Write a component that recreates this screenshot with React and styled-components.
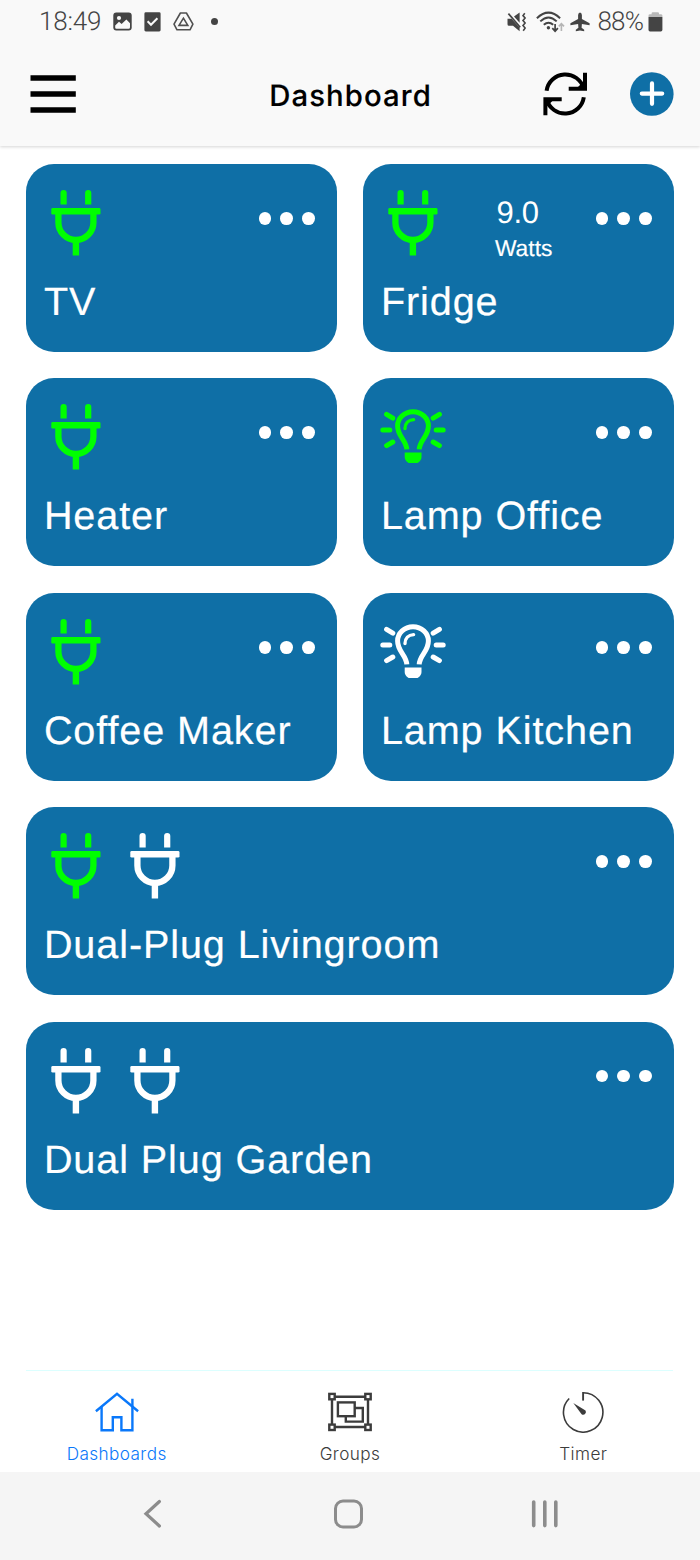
import React from "react"
import styled, { createGlobalStyle } from "styled-components"

const GlobalStyle = createGlobalStyle`
  * {
    box-sizing: border-box;
  }
  body {
    margin: 0;
    background: #ffffff;
    text-rendering: geometricPrecision;
  }
  button {
    padding: 0;
    border: none;
    background: none;
    font: inherit;
    color: inherit;
  }
  svg {
    display: block;
    flex: none;
  }
`

const Screen = styled.div`
  display: flex;
  flex-direction: column;
  width: 700px;
  height: 1560px;
  overflow: hidden;
  font-family: "Liberation Sans", Arial, sans-serif;
`

const Header = styled.header`
  height: 146px;
  background: #f9f9f9;
  box-shadow: 0 1px 3px rgba(0, 0, 0, 0.17);
`

const StatusBar = styled.div`
  display: flex;
  justify-content: space-between;
  height: 42px;
  padding: 0 37px 0 39px;
  font-family: Roboto, sans-serif;
  font-size: 26px;
  font-weight: 300;
  line-height: 42px;
  color: #444444;
`

const StatusGroup = styled.div`
  display: flex;
  align-items: center;
  height: 43px;
`

const StatusText = styled.span`
  width: ${(props) => props.$width}px;
  letter-spacing: ${(props) => props.$spacing || 0}px;
  white-space: nowrap;
`

const StatusIcons = styled.div`
  display: flex;
  align-items: center;
  gap: 12px;
  margin-left: 9px;
`

const SignalIcons = styled.div`
  display: flex;
  align-items: center;
  gap: ${(props) => props.$gap}px;
  margin-right: ${(props) => props.$after}px;
`

const Toolbar = styled.div`
  display: flex;
  align-items: center;
  height: 104px;
  padding: 0 26px 0 30px;
`

const ToolbarSide = styled.div`
  display: flex;
  flex: 1 0 0;
  justify-content: ${(props) => (props.$end ? "flex-end" : "flex-start")};
  gap: 42px;
`

const Title = styled.h1`
  margin: 0;
  padding: 6px 3px 0 0;
  font-family: Inter, sans-serif;
  font-size: 29.3px;
  font-weight: 500;
  line-height: 36px;
  letter-spacing: 1.1px;
  color: #000000;
  -webkit-text-stroke: 0.15px #000000;
`

const Devices = styled.main`
  display: grid;
  flex: 1;
  grid-template-columns: 1fr 1fr;
  grid-auto-rows: 188px;
  align-content: start;
  gap: 26.4px 26.5px;
  padding: 18px 26.5px 0 26px;
`

const Card = styled.section`
  display: flex;
  flex-direction: column;
  grid-column: ${(props) => (props.$wide ? "span 2" : "auto")};
  padding: 26px 21.5px 0 17.3px;
  border-radius: 28px;
  background: #0f6fa6;
  color: #ffffff;
`

const CardTop = styled.div`
  display: flex;
  justify-content: space-between;
  height: 66px;
`

const Plugs = styled.div`
  display: flex;
  gap: 12.4px;
`

const IconButton = styled.button`
  display: block;
  color: ${(props) => (props.$on ? "#00ff00" : "#ffffff")};
`

const Reading = styled.div`
  display: flex;
  flex-direction: column;
  width: 60px;
  margin-left: 8px;
  padding-top: 5px;
`

const Amount = styled.span`
  padding-left: 1.5px;
  font-size: 31px;
  line-height: 36px;
  letter-spacing: -0.3px;
`

const Unit = styled.span`
  font-size: 22.8px;
  line-height: 34px;
  -webkit-text-stroke: 0.15px #ffffff;
`

const More = styled.button`
  display: flex;
  gap: 9px;
  height: 13px;
  margin-top: 22px;
`

const Dot = styled.span`
  width: 12.8px;
  height: 12.8px;
  border-radius: 50%;
  background: #ffffff;
`

const Name = styled.h2`
  margin: 23px 0 0 0.6px;
  font-size: 39.6px;
  font-weight: 400;
  line-height: 46px;
  letter-spacing: 0.9px;
  white-space: nowrap;
  -webkit-text-stroke: 0.2px #ffffff;
`

const TabBar = styled.nav`
  display: flex;
  height: 102px;
  margin: 0 27px 0 26px;
  border-top: 1px solid #dcffff;
`

const Tabs = styled.div`
  display: flex;
  flex: 1;
  margin: 0 -27px 0 -26px;
`

const Tab = styled.button`
  display: flex;
  flex: 1;
  flex-direction: column;
  align-items: center;
  width: 0;
  padding-top: 20px;
  font-family: Inter, sans-serif;
  font-size: 17.2px;
  font-weight: 300;
  line-height: 22px;
  letter-spacing: 0.4px;
  color: ${(props) => (props.$active ? "#0a78fa" : "#3c3c3c")};
`

const TabLabel = styled.span`
  margin-top: 10px;
`

const SystemNav = styled.footer`
  display: flex;
  justify-content: space-between;
  height: 88px;
  padding: 25px 139px 0 141px;
  background: #f5f5f5;
  color: #8c8c8c;
`

const PhotoIcon = () => (
  <svg width="19" height="19" viewBox="0 0 19 19">
    <rect x="0.3" y="0.4" width="18.4" height="18.2" rx="3" fill="#444" />
    <circle cx="6" cy="6" r="2.1" fill="#f9f9f9" />
    <path d="M2.2 15.7V13.4L6 9.8L8.6 12L13.4 7.6L17 11.2V15.2Q17 16.8 15.6 16.8H3.4Q2.2 16.8 2.2 15.7Z" fill="#f9f9f9" />
  </svg>
)

const TaskIcon = () => (
  <svg width="17" height="20" viewBox="0 0 17 20">
    <rect x="0.4" y="0.3" width="16.2" height="19.2" rx="1.4" fill="#444" />
    <path d="M3.6 9.3L7 12.8L13.4 6.2" fill="none" stroke="#f9f9f9" strokeWidth="2" />
  </svg>
)

const DriveIcon = () => (
  <svg width="21" height="19" viewBox="0 0 21 19" fill="none" stroke="#505050">
    <path d="M7.4 1H13.4L19.9 12.2L17 17.8H4L1 12.2Z" strokeWidth="1.6" strokeLinejoin="round" />
    <path d="M10.4 6.2L14.8 13.4H6Z" strokeWidth="1.6" />
  </svg>
)

const StatusDot = styled.span`
  width: 7.4px;
  height: 7.4px;
  margin-left: 17px;
  border-radius: 50%;
  background: #444444;
`

const MuteIcon = () => (
  <svg width="20" height="20" viewBox="0 0 20 20">
    <path d="M0.5 6.8H4.6L12.6 15.4V19.2L6 13.8H2Q0.5 13.8 0.5 12.2Z" fill="#444" />
    <path d="M7 4.6L12.6 0.6V10.8Z" fill="#444" />
    <path d="M1.4 1.6L13.2 15.2" stroke="#444" strokeWidth="1.7" />
    <path d="M17.8 1.2L16 3.6L18.1 6.1L16 8.6L18.1 11.1L16 13.6L18.1 16.1L16.2 18.8" fill="none" stroke="#444" strokeWidth="1.6" />
  </svg>
)

const WifiIcon = () => (
  <svg width="29" height="22" viewBox="0 0 29 22" fill="none" stroke="#444" strokeWidth="2">
    <path d="M0.9 7.2Q12.5 -4 24.1 7.2" />
    <path d="M4.3 10.4Q12.5 2.6 20.7 10.4" />
    <path d="M7.8 13.8Q12.5 9.6 17.2 13.8" />
    <circle cx="12.4" cy="16.8" r="1.7" fill="#444" stroke="none" />
    <path d="M19.1 13V20M16.3 17.2L19.1 20.2L21.9 17.2" strokeWidth="1.7" />
    <path d="M25.4 20V13M22.8 15.4L25.4 12.6L28 15.4" stroke="#b5b5b5" strokeWidth="1.6" />
  </svg>
)

const PlaneIcon = () => (
  <svg width="20" height="20" viewBox="0 0 20 20" fill="#444">
    <path d="M10 0.4Q11.7 0.8 11.9 3V7L19.6 11.2V13.2L11.9 12L11.6 15.8L14.2 17.8V19.3L10 18.6L5.8 19.3V17.8L8.4 15.8L8.1 12L0.4 13.2V11.2L8.1 7V3Q8.3 0.8 10 0.4Z" />
  </svg>
)

const BatteryIcon = () => (
  <svg width="15" height="20" viewBox="0 0 15 20">
    <path d="M0.5 5V3.6Q0.5 2.2 2 2.2H3.6V1.4Q3.6 0.3 4.8 0.3H9.8Q11 0.3 11 1.4V2.2H12.8Q14.4 2.2 14.4 3.6V5Z" fill="#b8b8b8" />
    <path d="M0.5 5H14.4V17.8Q14.4 19.6 12.8 19.6H2Q0.5 19.6 0.5 17.8Z" fill="#444" />
  </svg>
)

const MenuIcon = () => (
  <svg width="46" height="40" viewBox="0 0 46 40">
    <path d="M0.5 4H45.8M0.5 20H45.8M0.5 36H45.8" stroke="#000" strokeWidth="5.3" />
  </svg>
)

const RefreshIcon = () => (
  <svg width="45" height="44" viewBox="0 0 45 44">
    <g fill="none" stroke="#000" strokeWidth="4" id="half">
      <path d="M3.6 18.7A18.9 18.9 0 0 1 40.6 16.5" />
      <path d="M42 0.7V16.8H25.7" />
      <path d="M34.5 15.5L40.5 9.5V15.5Z" fill="#000" stroke="none" />
    </g>
    <use href="#half" transform="rotate(180 22.2 22)" />
  </svg>
)

const AddIcon = () => (
  <svg width="44" height="44" viewBox="0 0 44 44">
    <circle cx="21.8" cy="22" r="21.8" fill="#0f6fa6" />
    <path d="M11.8 21.6H32.2M22 11.4V31.8" stroke="#fff" strokeWidth="4.2" strokeLinecap="round" />
  </svg>
)

const PlugIcon = () => (
  <svg width="66" height="66" viewBox="0 0 66 66" fill="currentColor">
    <path d="M17.5 14.4V3.1A3.1 3.1 0 0 1 23.7 3.1V14.4Z" />
    <path d="M42.1 14.4V3.1A3.1 3.1 0 0 1 48.3 3.1V14.4Z" />
    <rect x="8.3" y="18" width="49.2" height="6.6" rx="1.4" />
    <path d="M15.4 24V32.4A17.5 17.5 0 0 0 50.4 32.4V24" fill="none" stroke="currentColor" strokeWidth="6.3" />
    <rect x="29.7" y="51" width="6.4" height="14.5" />
  </svg>
)

const BulbIcon = () => (
  <svg width="66" height="66" viewBox="0 0 66 66" fill="none" stroke="currentColor" strokeWidth="5" strokeLinecap="round">
    <path
      d="M26.8 45.4C26.2 36 17.6 32.5 17.6 22A15.4 14.2 0 0 1 48.4 22C48.4 32.5 39.8 36 39.2 45.4"
      strokeLinecap="butt"
    />
    <path d="M25 24.6C25 19.5 28.5 15.9 33.6 15.6" strokeWidth="3.4" />
    <path d="M24.7 48.6H41.5V53Q41.5 56.5 37.6 59H28.6Q24.7 56.5 24.7 53Z" fill="currentColor" stroke="none" />
    <path d="M2.8 25.9H9.8M6.6 10.4L12.8 14.1M6.6 41.6L12.8 38" />
    <path d="M63.2 25.9H56.2M59.4 10.4L53.2 14.1M59.4 41.6L53.2 38" />
  </svg>
)

const HomeIcon = () => (
  <svg width="44" height="42" viewBox="0 0 44 42" fill="none" stroke="#0a78fa" strokeWidth="2.4">
    <path d="M0.9 20.2L22 2.8L43.1 20.2" />
    <path d="M6.6 15.6V39.2H17.8V26.2H26.4V39.2H37.4V7.8" />
  </svg>
)

const GroupsIcon = () => (
  <svg width="44" height="42" viewBox="0 0 44 42" fill="none" stroke="#3c3c3c" strokeWidth="2.4">
    <path d="M7 5.7H37M7 36H37M4 9V33M40 9V33" />
    <rect x="1.3" y="2.9" width="5.4" height="5.4" />
    <rect x="37.3" y="2.9" width="5.4" height="5.4" />
    <rect x="1.3" y="33.6" width="5.4" height="5.4" />
    <rect x="37.3" y="33.6" width="5.4" height="5.4" />
    <rect x="9.9" y="11.4" width="16.8" height="13.8" />
    <path d="M27 17H34.8V30.6H17.8V26" />
  </svg>
)

const TimerIcon = () => (
  <svg width="44" height="42" viewBox="0 0 44 42" fill="none" stroke="#3c3c3c">
    <path d="M22.1 1.7A19.7 19.7 0 1 1 8.2 7.5" strokeWidth="1.6" />
    <path d="M22.1 1V9.6" strokeWidth="1.9" />
    <path d="M12.3 11.9L24.5 19.6A2.7 2.7 0 0 1 20.6 23.2Z" fill="#3c3c3c" stroke="none" />
  </svg>
)

const BackIcon = () => (
  <svg width="24" height="34" viewBox="0 0 24 34">
    <path d="M18.4 4.5L5 16.7L18.4 29" fill="none" stroke="currentColor" strokeWidth="3.2" strokeLinecap="round" />
  </svg>
)

const HomeKeyIcon = () => (
  <svg width="34" height="34" viewBox="0 0 34 34">
    <rect x="5.5" y="4" width="26" height="26" rx="7.5" fill="none" stroke="currentColor" strokeWidth="3" />
  </svg>
)

const RecentsIcon = () => (
  <svg width="32" height="34" viewBox="0 0 32 34">
    <path d="M4.7 5V28.6M15.8 5V28.6M26.8 5V28.6" stroke="currentColor" strokeWidth="3.6" strokeLinecap="round" />
  </svg>
)

const devices = [
  { name: "TV", type: "plug", switches: [true] },
  { name: "Fridge", type: "plug", switches: [true], watts: "9.0" },
  { name: "Heater", type: "plug", switches: [true] },
  { name: "Lamp Office", type: "lamp", switches: [true] },
  { name: "Coffee Maker", type: "plug", switches: [true] },
  { name: "Lamp Kitchen", type: "lamp", switches: [false] },
  { name: "Dual-Plug Livingroom", type: "plug", switches: [true, false] },
  { name: "Dual Plug Garden", type: "plug", switches: [false, false] },
]

const tabs = [
  { label: "Dashboards", Icon: HomeIcon },
  { label: "Groups", Icon: GroupsIcon },
  { label: "Timer", Icon: TimerIcon },
]

const DeviceCard = ({ device, onToggle }) => {
  const Icon = device.type === "lamp" ? BulbIcon : PlugIcon
  return (
    <Card $wide={device.switches.length > 1}>
      <CardTop>
        <Plugs>
          {device.switches.map((on, i) => (
            <IconButton key={i} $on={on} onClick={() => onToggle(i)}>
              <Icon />
            </IconButton>
          ))}
        </Plugs>
        {device.watts && (
          <Reading>
            <Amount>{device.watts}</Amount>
            <Unit>Watts</Unit>
          </Reading>
        )}
        <More aria-label="More">
          <Dot />
          <Dot />
          <Dot />
        </More>
      </CardTop>
      <Name>{device.name}</Name>
    </Card>
  )
}

const App = () => {
  const [list, setList] = React.useState(devices)
  const [active, setActive] = React.useState("Dashboards")

  const handleToggle = (name, index) => {
    setList(
      list.map((item) =>
        item.name === name
          ? { ...item, switches: item.switches.map((on, i) => (i === index ? !on : on)) }
          : item
      )
    )
  }

  return (
    <Screen>
      <GlobalStyle />
      <Header>
        <StatusBar>
          <StatusGroup>
            <StatusText $width={65} $spacing={-0.2}>18:49</StatusText>
            <StatusIcons>
              <PhotoIcon />
              <TaskIcon />
              <DriveIcon />
            </StatusIcons>
            <StatusDot />
          </StatusGroup>
          <StatusGroup>
            <SignalIcons $gap={9} $after={4.5}>
              <MuteIcon />
              <WifiIcon />
            </SignalIcons>
            <SignalIcons $gap={8} $after={0}>
              <PlaneIcon />
              <StatusText $width={50.5} $spacing={-0.8}>88%</StatusText>
            </SignalIcons>
            <BatteryIcon />
          </StatusGroup>
        </StatusBar>
        <Toolbar>
          <ToolbarSide>
            <button aria-label="Menu">
              <MenuIcon />
            </button>
          </ToolbarSide>
          <Title>Dashboard</Title>
          <ToolbarSide $end>
            <button aria-label="Refresh">
              <RefreshIcon />
            </button>
            <button aria-label="Add">
              <AddIcon />
            </button>
          </ToolbarSide>
        </Toolbar>
      </Header>
      <Devices>
        {list.map((item) => (
          <DeviceCard key={item.name} device={item} onToggle={(i) => handleToggle(item.name, i)} />
        ))}
      </Devices>
      <TabBar>
        <Tabs>
          {tabs.map(({ label, Icon }) => (
            <Tab key={label} $active={active === label} onClick={() => setActive(label)}>
              <Icon />
              <TabLabel>{label}</TabLabel>
            </Tab>
          ))}
        </Tabs>
      </TabBar>
      <SystemNav>
        <BackIcon />
        <HomeKeyIcon />
        <RecentsIcon />
      </SystemNav>
    </Screen>
  )
}

export default App
